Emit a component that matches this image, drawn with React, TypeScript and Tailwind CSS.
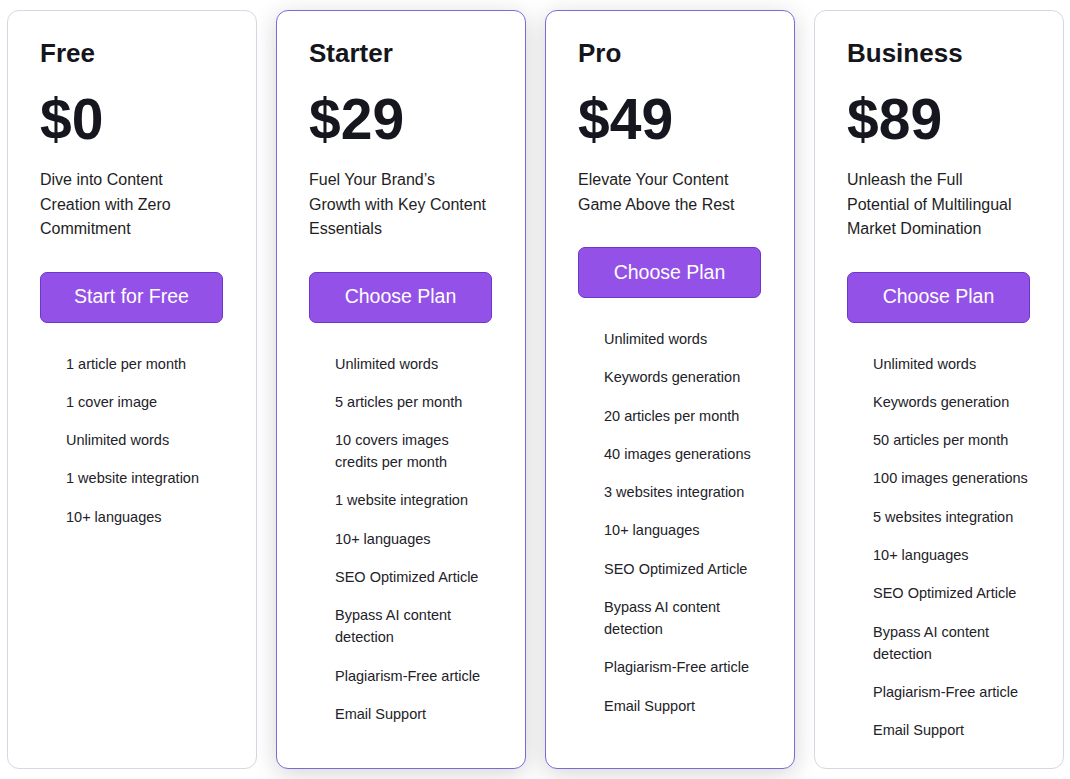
import React from 'react';

type Plan = {
  name: string;
  price: string;
  blurb: string;
  cta: string;
  highlight: boolean;
  features: string[];
};

const plans: Plan[] = [
  {
    name: "Free",
    price: "$0",
    blurb: "Dive into Content Creation with Zero Commitment",
    cta: "Start for Free",
    highlight: false,
    features: ["1 article per month", "1 cover image", "Unlimited words", "1 website integration", "10+ languages"],
  },
  {
    name: "Starter",
    price: "$29",
    blurb: "Fuel Your Brand\u2019s Growth with Key Content Essentials",
    cta: "Choose Plan",
    highlight: true,
    features: [
      "Unlimited words",
      "5 articles per month",
      "10 covers images credits per month",
      "1 website integration",
      "10+ languages",
      "SEO Optimized Article",
      "Bypass AI content detection",
      "Plagiarism-Free article",
      "Email Support",
    ],
  },
  {
    name: "Pro",
    price: "$49",
    blurb: "Elevate Your Content Game Above the Rest",
    cta: "Choose Plan",
    highlight: true,
    features: [
      "Unlimited words",
      "Keywords generation",
      "20 articles per month",
      "40 images generations",
      "3 websites integration",
      "10+ languages",
      "SEO Optimized Article",
      "Bypass AI content detection",
      "Plagiarism-Free article",
      "Email Support",
    ],
  },
  {
    name: "Business",
    price: "$89",
    blurb: "Unleash the Full Potential of Multilingual Market Domination",
    cta: "Choose Plan",
    highlight: false,
    features: [
      "Unlimited words",
      "Keywords generation",
      "50 articles per month",
      "100 images generations",
      "5 websites integration",
      "10+ languages",
      "SEO Optimized Article",
      "Bypass AI content detection",
      "Plagiarism-Free article",
      "Email Support",
    ],
  },
];

function PlanCard({ plan }: { plan: Plan }) {
  return (
    <div
      className={
        plan.highlight
          ? "flex w-[250px] flex-col rounded-xl border border-[#7a6cd6] bg-white px-8 pt-[26px] pb-[27px] shadow-[0_5px_24px_rgba(0,0,0,0.17)]"
          : "flex w-[250px] flex-col rounded-xl border border-[#d3d8e2] bg-white px-8 pt-[26px] pb-[27px]"
      }
    >
      <h3 className="text-[26px] font-bold leading-[32px] text-[#15151c]">{plan.name}</h3>
      <p className="mt-[22px] text-[57px] font-bold leading-none text-[#16161f]">{plan.price}</p>
      <p className="mt-[20px] max-w-[180px] text-[16px] leading-[24.5px] text-[#1e1e24]">{plan.blurb}</p>
      <button className="mt-[30px] h-[51px] w-[183px] rounded-[7px] border border-[#6b37cc] bg-[#9351e8] text-[19.5px] text-white">
        {plan.cta}
      </button>
      <ul className="mt-[30px] flex flex-col gap-[16.3px] pl-[26px]">
        {plan.features.map((f) => (
          <li key={f} className="text-[14.5px] leading-[22px] text-[#222228]">
            {f}
          </li>
        ))}
      </ul>
    </div>
  );
}

export default function App() {
  return (
    <div className="min-h-[779px] bg-white pl-[7px] pt-[10px] font-['Liberation_Sans',Arial,sans-serif]">
      <div className="flex items-stretch gap-[19px]">
        {plans.map((p) => (
          <PlanCard key={p.name} plan={p} />
        ))}
      </div>
    </div>
  );
}
